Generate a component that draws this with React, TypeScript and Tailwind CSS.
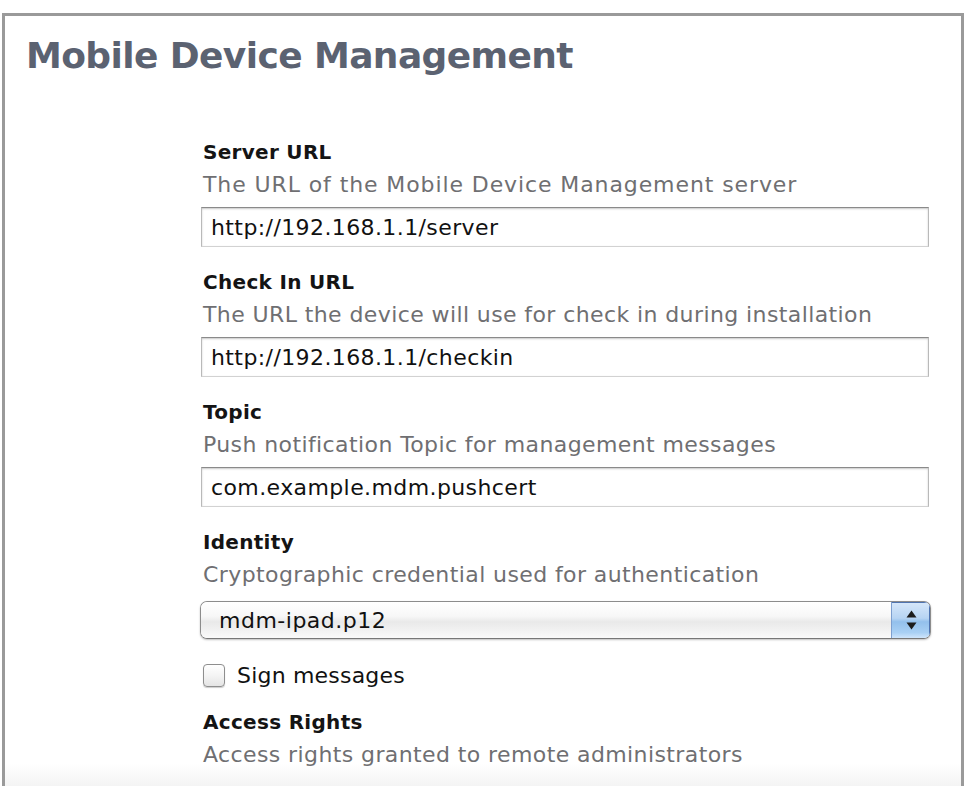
import { useState } from 'react'

const fields = [
  { label: 'Server URL', help: 'The URL of the Mobile Device Management server', value: 'http://192.168.1.1/server', wide: true },
  { label: 'Check In URL', help: 'The URL the device will use for check in during installation', value: 'http://192.168.1.1/checkin', wide: false },
  { label: 'Topic', help: 'Push notification Topic for management messages', value: 'com.example.mdm.pushcert', wide: false },
]

function FieldLabel({ label, help, wide }: { label: string; help: string; wide?: boolean }) {
  return (
    <div className="pl-[2px]">
      <div className="text-[20px] leading-[24px] font-bold tracking-[0.3px] text-[#141414]">{label}</div>
      <div className={`mt-[7px] text-[22px] leading-[28px] text-[#6f6f72] ${wide ? 'tracking-[0.9px]' : 'tracking-[0.4px]'}`}>{help}</div>
    </div>
  )
}

export default function App() {
  const [signed, setSigned] = useState(false)

  return (
    <div className="min-h-screen bg-white pt-[13px] font-['DejaVu_Sans',sans-serif]">
      <div className="ml-[2px] w-[962px] h-[773px] border-x-[3px] border-t-[3px] border-[#9a9a9a] bg-[linear-gradient(180deg,#ffffff_0px,#ffffff_748px,#f2f2f2_773px)]">
        {/* Title */}
        <h1 className="pt-[18px] pl-[21px] text-[36px] leading-[44px] font-bold tracking-[-0.6px] text-[#5b6271]">
          Mobile Device Management
        </h1>

        {/* Form column */}
        <div className="mt-[62px] ml-[196px] w-[728px]">
          {fields.map((f, i) => (
            <div key={f.label} className={i > 0 ? 'mt-[23px]' : ''}>
              <FieldLabel label={f.label} help={f.help} wide={f.wide} />
              <div className="mt-[8px] h-[40px] flex items-center border border-[#b9b9b9] border-t-[#8a8a8a] border-b-[#d2d2d2] bg-white pl-[9px] shadow-[inset_0_1px_2px_rgba(0,0,0,0.22)] text-[22px] tracking-[0.4px] text-[#111]">
                {f.value}
              </div>
            </div>
          ))}

          {/* Identity */}
          <div className="mt-[23px]">
            <FieldLabel label="Identity" help="Cryptographic credential used for authentication" />
            <div className="mt-[12px] -ml-px w-[731px] h-[38px] flex rounded-[7px] border border-[#8c8c8c] border-b-[#777] shadow-[0_1px_2px_rgba(0,0,0,0.25)] overflow-hidden">
              <div className="flex-1 flex items-center pl-[18px] text-[22px] tracking-[0.5px] text-[#111] bg-[linear-gradient(180deg,#ffffff_0%,#f7f7f7_40%,#e9e9e9_55%,#f2f2f2_80%,#fafafa_100%)]">
                mdm-ipad.p12
              </div>
              <div className="w-[39px] flex flex-col items-center justify-center gap-[4px] border-l border-[#7d9fcf] bg-[linear-gradient(180deg,#d7e8fa_0%,#b7d4f3_45%,#93c0ec_55%,#a9d0f4_85%,#cfe5fb_100%)] shadow-[inset_-1px_0_0_#4f74b0,inset_0_1px_0_#4f74b0]">
                <svg width="11" height="8" viewBox="0 0 11 8"><path d="M5.5 0.5 L10.5 7.5 L0.5 7.5 Z" fill="#1c1c1c" /></svg>
                <svg width="11" height="8" viewBox="0 0 11 8"><path d="M0.5 0.5 L10.5 0.5 L5.5 7.5 Z" fill="#1c1c1c" /></svg>
              </div>
            </div>
          </div>

          {/* Sign messages */}
          <label className="mt-[22px] flex items-center h-[28px] cursor-pointer">
            <button
              type="button"
              onClick={() => setSigned(!signed)}
              className="ml-[2px] w-[22px] h-[23px] rounded-[4px] border border-[#8e8e8e] bg-[linear-gradient(180deg,#ffffff_0%,#f4f4f4_50%,#e4e4e4_100%)] shadow-[0_1px_1px_rgba(0,0,0,0.2)] flex items-center justify-center"
            >
              {signed && (
                <svg width="14" height="14" viewBox="0 0 14 14"><path d="M2 7.5 L5.5 11 L12 2.5" stroke="#1c1c1c" strokeWidth="2.2" fill="none" /></svg>
              )}
            </button>
            <span className="ml-[12px] text-[22px] tracking-[0.2px] text-[#111]">Sign messages</span>
          </label>

          {/* Access rights */}
          <div className="mt-[21px]">
            <FieldLabel label="Access Rights" help="Access rights granted to remote administrators" />
          </div>
        </div>
      </div>
    </div>
  )
}
